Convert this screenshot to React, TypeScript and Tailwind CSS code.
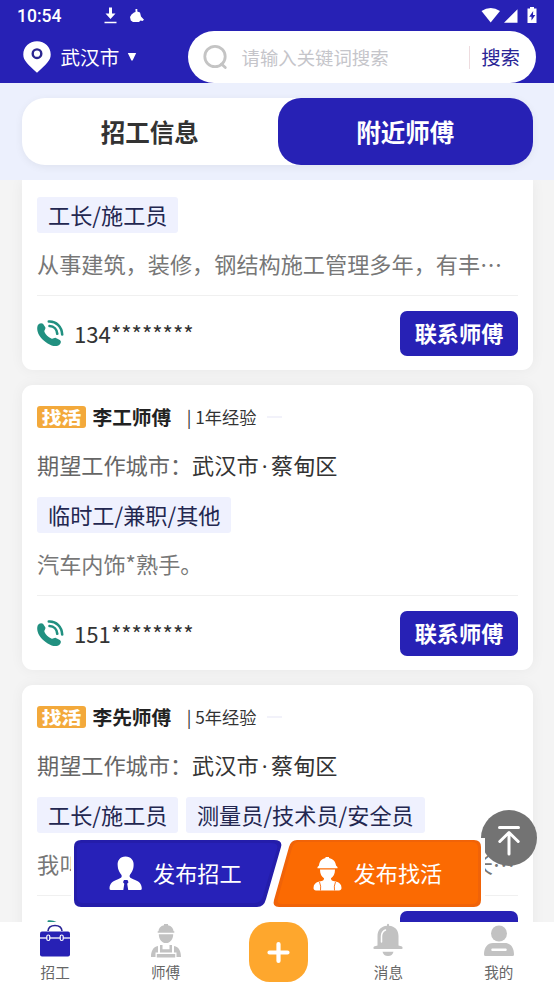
import type { ReactNode } from "react";

interface Worker {
  id: number;
  name?: string;
  years?: string;
  city?: string[];
  tags: string[];
  desc: string[];
  phone?: string;
}

const workers: Worker[] = [
  {
    id: 1, tags: ["工长/施工员"],
    desc: ["从事建筑，装修，钢结构施工管理多年，有丰…"], phone: "134********",
  },
  {
    id: 2, name: "李工师傅", years: "1年经验", city: ["武汉市", "蔡甸区"], tags: ["临时工/兼职/其他"],
    desc: ["汽车内饰*熟手。"], phone: "151********",
  },
  {
    id: 3, name: "李先师傅", years: "5年经验", city: ["武汉市", "蔡甸区"], tags: ["工长/施工员", "测量员/技术员/安全员"],
    desc: ["我叫", "长…"],
  },
];

const StatusBar = () => (
  <div className="flex h-[31px] items-center pl-[17px] pr-[17px] text-white">
    <span className="w-[87px] pt-[2px] font-[Roboto] text-[17.5px] font-medium leading-none">10:54</span>
    <svg width="13" height="18" viewBox="0 0 13 18" fill="currentColor">
      <path d="M5 .500h3v6h3.500L6.500 12 1.500 6.500H5zM0.500 14.800h12v1.500h-12z" />
    </svg>
    <svg className="ml-[13px]" width="14" height="16" viewBox="0 0 14 16" fill="currentColor">
      <path d="M4 4.500 5.500 4V1h1.800v2.500L10 4.500l1 4 3 3.300-1.500 1.200-2-.5L9 14H3L.8 12.500 0 9l1.500-2.500z" />
    </svg>
    <svg className="ml-auto" width="56" height="18" viewBox="0 0 56 18" fill="currentColor">
      <path d="M.5 4Q9.700-2 19 4L9.700 15.500z" />
      <path d="M23 15.800 36.500 2.300v13.500z" />
      <path fillRule="evenodd" d="M49 0h4v1.500h2.500V16h-9V1.500H49zM52.200 4l-4 5.800h2.300v3.800l3.800-5.700H52z" />
    </svg>
  </div>
);

const Header = () => (
  <header className="h-[83px] shrink-0 bg-[#2721b5]">
    <StatusBar />
    <div className="flex h-[52px] items-center pr-[18px]">
      <svg className="ml-[23px]" width="28" height="32" viewBox="0 0 28 32">
        <path d="M14 .3C6.300.3.300 6 .300 13.500c0 6 4.200 9.500 13.700 18.200 9.500-8.700 13.700-12.200 13.700-18.200C27.700 6 21.700.3 14 .3z" fill="#fff" />
        <circle cx="14" cy="12.700" r="4.300" fill="#fff" stroke="#2b2690" strokeWidth="2.400" />
      </svg>
      <span className="ml-[9.500px] text-[19.6px] leading-none text-white">武汉市</span>
      <svg className="ml-[8px]" width="10" height="8" viewBox="0 0 10 8">
        <path d="M.8 0h8.400L5.700 7.200q-.7.9-1.400 0z" fill="#fff" />
      </svg>
      <div className="ml-auto flex h-[52px] w-[348px] items-center rounded-full bg-white">
        <svg className="ml-[15px]" width="26" height="26" viewBox="0 0 26 26" fill="none" stroke="#c4c4c4" strokeWidth="2.800">
          <circle cx="12" cy="12.500" r="10.200" />
          <path d="m18.500 20 3.800 3.500" strokeLinecap="round" />
        </svg>
        <span className="ml-[12.500px] text-[18.400px] leading-none text-[#c5c5ca]">请输入关键词搜索</span>
        <span className="ml-auto h-[23px] w-px bg-[#eedcdf]" />
        <span className="ml-[11px] mr-[16px] text-[19.400px] leading-none text-[#2a2596]">搜索</span>
      </div>
    </div>
  </header>
);

const Tabs = () => (
  <div className="h-[97px] shrink-0 bg-[#ecf0fd] pl-[22px] pr-[21px] pt-[15px]">
    <div className="flex h-[67px] rounded-[23px] bg-white text-[24.500px] font-bold shadow-[0_2px_8px_rgba(0,0,0,0.06)]">
      <button className="flex-1 pt-[2px] text-[#333]">招工信息</button>
      <button className="flex-1 rounded-[23px] bg-[#2721b5] pt-[2px] text-white">附近师傅</button>
    </div>
  </div>
);

const PhoneIcon = () => (
  <svg width="27" height="27" viewBox="0 0 27 27" fill="none">
    <path d="M.8 5.300C2 3 4.500 2.600 6 3.800l2.300 3.500c.8 2-1.500 2.800-.8 4.600 1.200 2.900 3.600 5 6.800 6.600 1.800.8 2.600-1 4.600-.6l3.900 2c1.600 1 1.400 3-.1 4.500-2.700 2.500-7.500 1.900-12-1C5 20 .9 15 .3 10c-.2-2 0-3.500.5-4.700z" fill="#219080" />
    <path d="M11.800 1.500C19 1 24.800 6.500 25.200 14.500M12.500 6C17 6.300 20 9.500 20.300 13.800" stroke="#219080" strokeWidth="2.600" strokeLinecap="round" />
  </svg>
);

const WorkerCard = ({ name, years, city, tags, desc, phone }: Omit<Worker, "id">) => (
  <article className="flex shrink-0 flex-col rounded-[11px] bg-white px-[15px] shadow-[0_0_14px_rgba(0,0,0,0.05)]">
    {name && (
      <div className="mt-[20px] flex h-[24px] items-center">
        <span className="flex h-[22px] w-[49px] items-center justify-center rounded-[3px] bg-[#f3a93b] text-[19.700px] font-black leading-none text-white">
          <span className="inline-block scale-y-[0.88]">找活</span>
        </span>
        <span className="ml-[6.500px] text-[19.700px] font-bold leading-none text-[#222]">{name}</span>
        <span className="ml-[15.500px] whitespace-pre text-[17.200px] leading-none text-[#333]">| {years}</span>
        <span className="ml-[11px] h-[2px] w-[15px] bg-[#f2f2fa]" />
      </div>
    )}
    {city && (
      <p className="mt-[19px] h-[32px] whitespace-nowrap text-[22.160px] leading-[32px] text-[#666]">
        期望工作城市：
        <span className="text-[#333]">
          {city[0]}<span className="px-[3.300px] font-['Open_Sans']">·</span>{city[1]}
        </span>
      </p>
    )}
    <div className="mt-[17px] flex gap-[7.500px]">
      {tags.map((tag) => (
        <span key={tag} className="h-[36px] rounded-[3px] bg-[#eff1fe] px-[11px] text-[22.160px] leading-[34px] text-[#232750]">{tag}</span>
      ))}
    </div>
    <p className="mt-[13px] flex h-[34px] justify-between whitespace-nowrap pr-[3px] text-[22.160px] leading-[34px] text-[#777]">
      {desc.map((part) => <span key={part}>{part}</span>)}
    </p>
    <div className="mt-[15px] flex h-[75px] items-center border-t border-[#f0f0f0]">
      <PhoneIcon />
      <span className="ml-[10px] text-[22.160px] leading-none text-[#333]">{phone}</span>
      <button className="ml-auto h-[45px] w-[118px] rounded-[7px] bg-[#2721b5] text-[22.160px] font-bold text-white">
        {phone && "联系师傅"}
      </button>
    </div>
  </article>
);

const BackToTop = () => (
  <button className="absolute left-[481px] top-[810px] flex h-[56px] w-[56px] items-center justify-center rounded-full bg-[#737373] pt-[5px]">
    <svg width="24" height="32" viewBox="0 0 24 32" fill="none" stroke="#fff" strokeWidth="3" strokeLinecap="round" strokeLinejoin="round">
      <path d="M2.500 2.500h19M12 29V8M2.800 16.500 12 7.500 21.200 16.500" />
    </svg>
  </button>
);

// Наклонные кнопки публикации поверх списка
const PublishBar = () => (
  <div className="absolute left-[71px] top-[838px] grid h-[71px] w-[414px] bg-white">
    <svg className="col-start-1 row-start-1" width="414" height="71" viewBox="0 0 414 71">
      <path d="M10 2h193q9 0 7 7l-15 52q-2 8-9 8H10q-7 0-7-7V9q0-7 7-7z" fill="#241daa" />
      <path d="M11 5h189q8 0 6 6l-14 47q-2 7-8 7H12q-6 0-6-6V10q0-5 5-5z" fill="#2721b8" />
      <path d="M226 2h177q7 0 7 7v53q0 7-7 7H208q-7 0-5-7l15-53q2-7 8-7z" fill="#f06308" />
      <path d="M227 4h174q6 0 6 6v50q0 6-6 6H211q-6 0-4-6l14-50q2-6 6-6z" fill="#fb6a02" />
    </svg>
    <div className="col-start-1 row-start-1 flex items-center text-[22.160px] leading-none text-white">
      <svg className="ml-[38px]" width="33" height="35" viewBox="0 0 33 35">
        <path d="M16.500 .5c5.500 0 8.600 4 8.100 9.200-.3 4.800-2.500 7.300-3.800 9.300-.8 2 .3 3 3.500 4.200 5 1.700 8.500 4.100 8.500 9.300q0 1.500-1.500 1.500H2Q.5 34 .5 32.500c0-5.200 3.500-7.600 8.500-9.300 3.200-1.200 4.300-2.200 3.500-4.200-1.300-2-3.500-4.500-3.800-9.300C8.200 4.500 11 .5 16.500 .5z" fill="#fff" />
        <path d="M15 24h3.500l1 2.200-1.300 1.500 1 6.300h-4.900l1-6.300-1.300-1.500z" fill="#2721b5" />
      </svg>
      <span className="ml-[11px] pb-[3px]">发布招工</span>
      <svg className="ml-[71px]" width="29" height="36" viewBox="0 0 29 36">
        <path d="M12.500 1h3.500v1c4 .8 6.500 3.500 7 7.500l1.500 1.500v1.200H4.500V11L6 9.500C6.500 5.500 8.500 2.800 12.500 2zM7 13.500h15c0 4.500-1.500 7-4 8.800 0 2 1 2.600 4.500 3.200 4 .8 6 3 6 6.500 0 1.500-1 2.500-2.500 2.500H3C1.500 34.500.5 33.500.5 32c0-3.500 2-5.700 6-6.500 3.500-.6 4.500-1.200 4.500-3.200C8.500 20.500 7 18 7 13.500z" fill="#fff" />
        <path d="M6.500 26q1.800 4 1 8.500M22.500 26q-1.800 4-1 8.500" stroke="#fb7a25" strokeWidth="1" fill="none" />
      </svg>
      <span className="ml-[12px] pb-[3px]">发布找活</span>
    </div>
  </div>
);

const NavItem = ({ label, children }: { label: string; children: ReactNode }) => (
  <button className="flex flex-1 flex-col items-center">
    <svg width="32" height="36" viewBox="0 0 32 36" fill="#c2c2c2">{children}</svg>
    <span className="mt-[6px] text-[14.600px] leading-[16px] text-[#666]">{label}</span>
  </button>
);

const BottomNav = () => (
  <nav className="flex h-[62px] shrink-0 bg-white">
    <NavItem label="招工">
      <path d="M9 9Q9.500 3.500 16 3.500T23 9" fill="none" stroke="#2a2596" strokeWidth="1.600" />
      <rect x="1" y="9.500" width="30" height="25" rx="2" fill="#2721b5" />
      <path d="M1 16h30" stroke="#fff" strokeWidth="1.300" />
      <rect x="7.800" y="13" width="3" height="5.500" rx="1.500" fill="#2721b5" stroke="#fff" strokeWidth="1.200" />
      <rect x="21.200" y="13" width="3" height="5.500" rx="1.500" fill="#2721b5" stroke="#fff" strokeWidth="1.200" />
    </NavItem>
    <NavItem label="师傅">
      <path d="M14 2h4v1.200c3.500.8 5.500 3 5.500 6h.8v1.500H7.700V9.200h.8c0-3 2-5.200 5.500-6zM8.800 12.200h14.400c0 5-3 8.800-7.200 8.800s-7.200-3.800-7.200-8.800z" />
      <path d="M10 23h2.500v4.200h7V23H22v7.500H10zM8 24v6.500H5.500V35H1c0-6 2-10 7-11zM24 24v6.500h2.500V35H31c0-6-2-10-7-11zM6.800 32h18.400v3.500H6.800z" />
    </NavItem>
    <div className="flex flex-1 justify-center pl-[2px]">
      <button className="flex h-[60px] w-[59px] items-center justify-center rounded-[21px] bg-[#fea72d]">
        <svg width="25" height="25" viewBox="0 0 25 25" stroke="#fff" strokeWidth="4.200" strokeLinecap="round">
          <path d="M12.500 4v17M3.500 12.500h18" />
        </svg>
      </button>
    </div>
    <NavItem label="消息">
      <path d="M15 2.500q1-1.500 2 0v1.200C23 4.200 26.500 8 26.500 14v9.500l3.500 1q1.500 2-.5 2.500h-27Q.500 26.500 2 24.500l3.500-1V14C5.500 8 9 4.200 15 3.700zM10.500 29.800h11q-1 4.200-5.500 4.200t-5.500-4.200z" />
      <path d="M9.500 20v-6q.3-4.500 4-6" fill="none" stroke="#fff" strokeWidth="1.500" strokeLinecap="round" />
    </NavItem>
    <NavItem label="我的">
      <circle cx="16" cy="11.500" r="8" />
      <path fillRule="evenodd" d="M10 21h12c5.500 0 9 4.500 9 11.500q0 1.500-1.500 1.500h-27Q1 34 1 32.500C1 25.500 4.500 21 10 21zM9 26.500q-1.500 1.200 0 2.500h14q1.500-1.300 0-2.500z" />
    </NavItem>
  </nav>
);

export default function App() {
  return (
    <div className="relative flex h-[984px] w-[554px] flex-col overflow-hidden bg-[#f4f4f4] font-['Noto_Sans_CJK_SC',sans-serif]">
      <Header />
      <Tabs />
      <main className="min-h-0 flex-1 overflow-hidden pl-[22px] pr-[21px]">
        <div className="flex flex-col gap-[15px] [&>article:first-child]:rounded-t-none">
          {workers.map(({ id, ...worker }) => <WorkerCard key={id} {...worker} />)}
        </div>
      </main>
      <BottomNav />
      <BackToTop />
      <PublishBar />
    </div>
  );
}
